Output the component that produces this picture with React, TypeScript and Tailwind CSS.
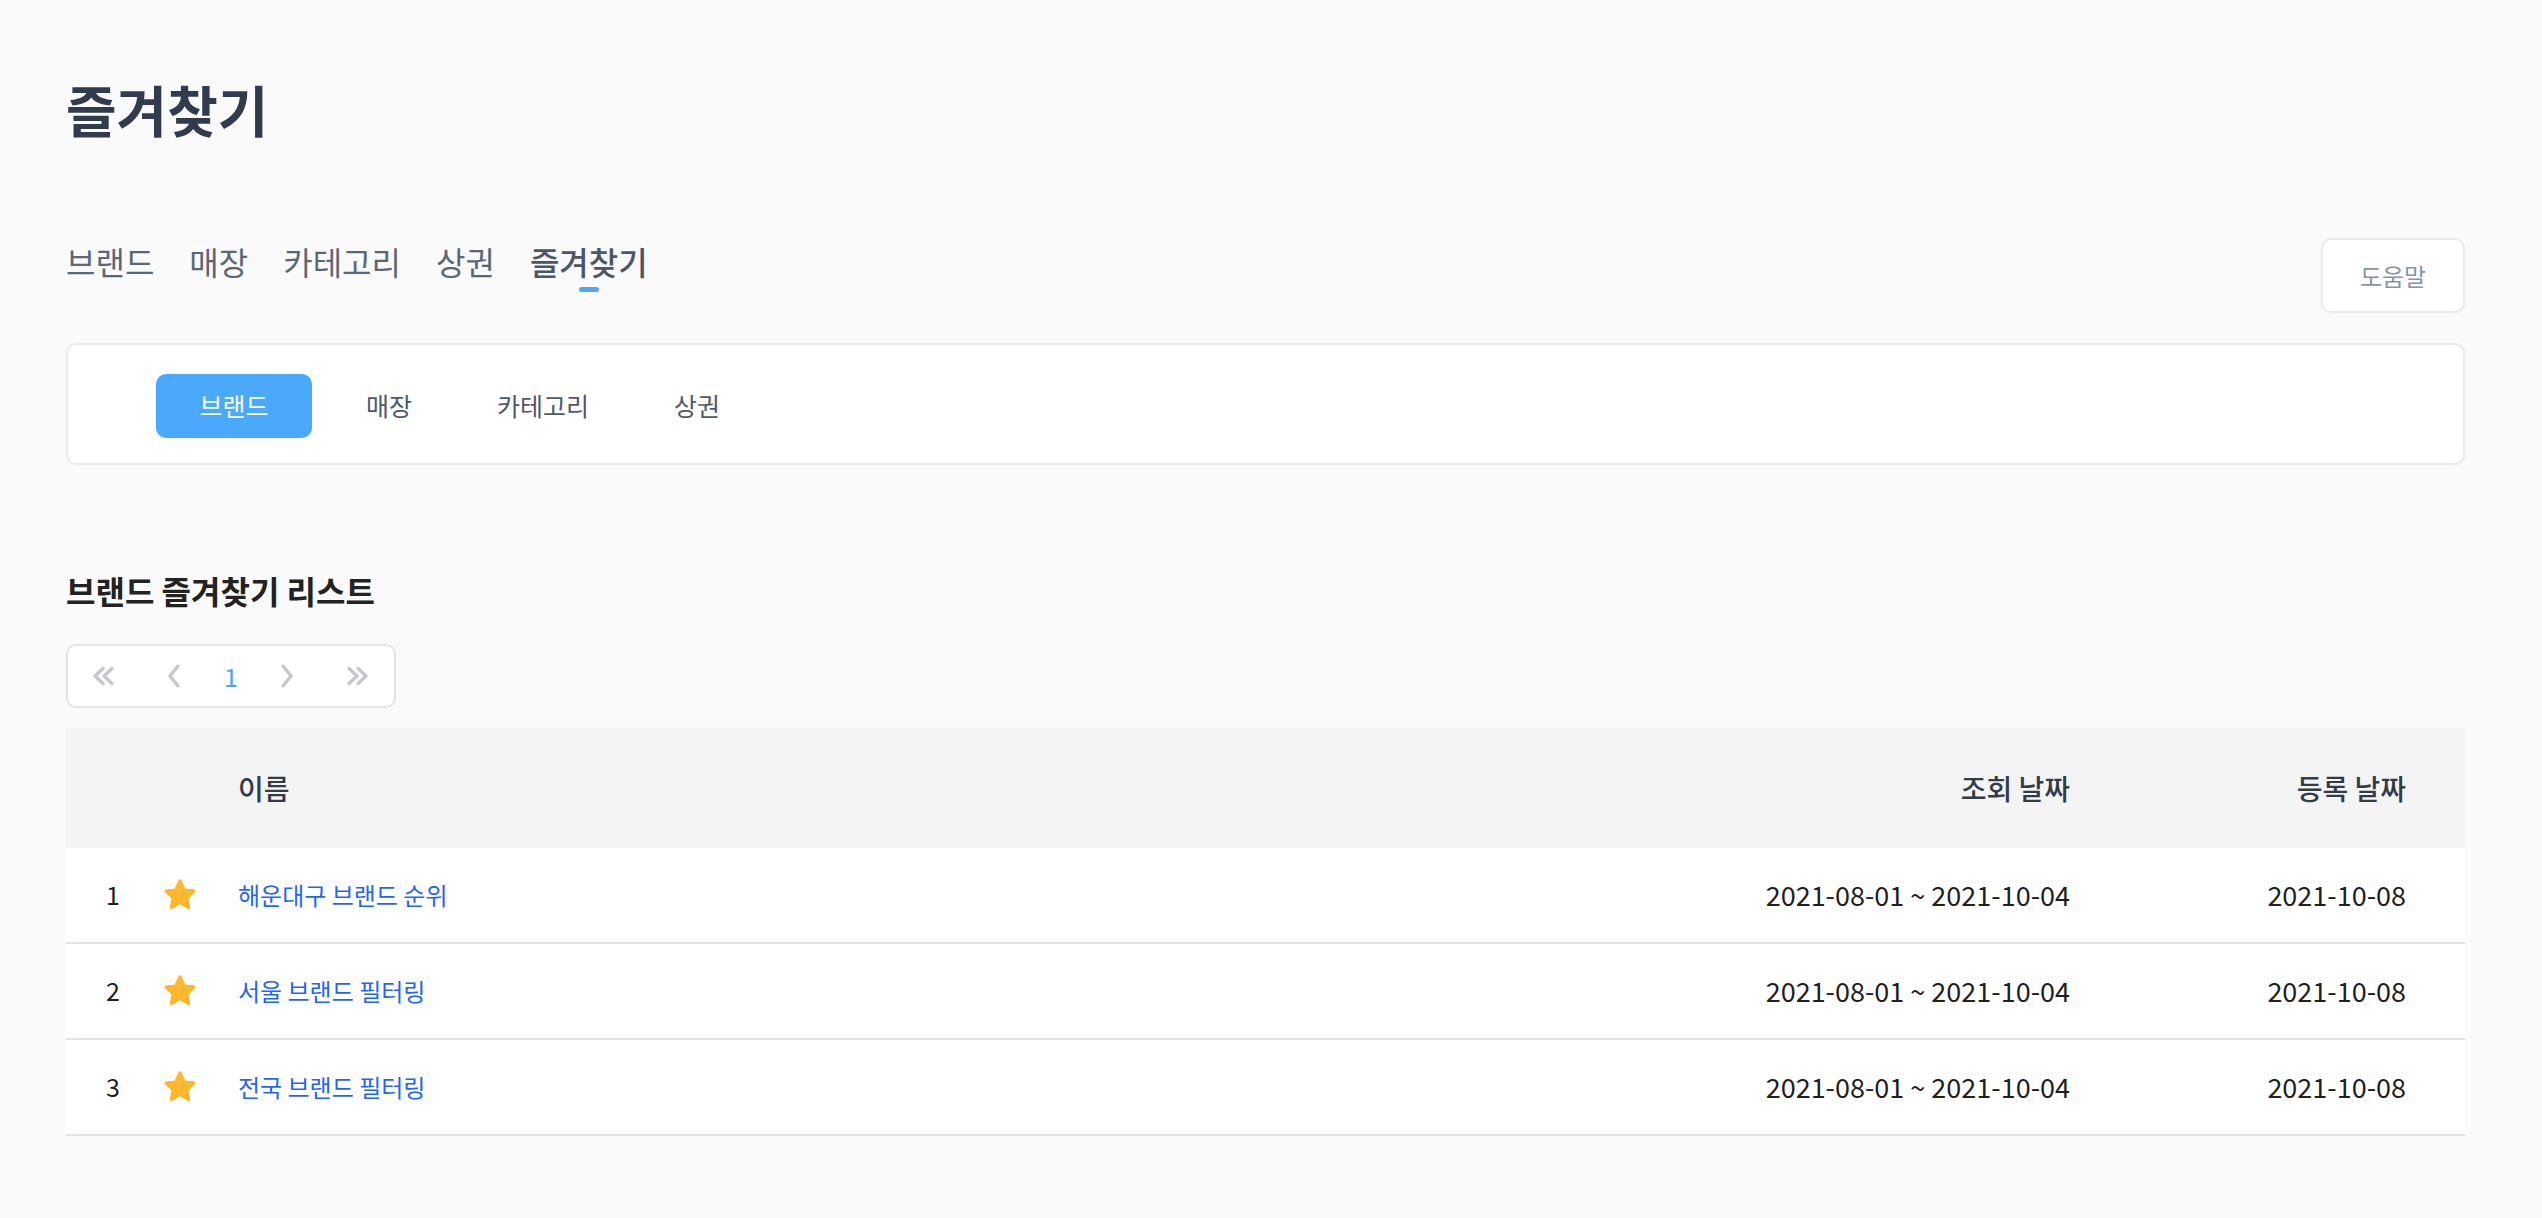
import React from 'react';

const FONT = { fontFamily: '"Noto Sans CJK KR", "Noto Sans", sans-serif' };

const topTabs = ['브랜드', '매장', '카테고리', '상권', '즐겨찾기'];
const subTabs = ['브랜드', '매장', '카테고리', '상권'];

const rows = [
  { no: 1, name: '해운대구 브랜드 순위', range: '2021-08-01 ~ 2021-10-04', date: '2021-10-08' },
  { no: 2, name: '서울 브랜드 필터링', range: '2021-08-01 ~ 2021-10-04', date: '2021-10-08' },
  { no: 3, name: '전국 브랜드 필터링', range: '2021-08-01 ~ 2021-10-04', date: '2021-10-08' },
];

const StarIcon = () => (
  <svg width="36" height="36" viewBox="0 0 24 24">
    <polygon
      points="12,2.6 14.9,8.6 21.4,9.4 16.6,13.9 17.9,20.4 12,17.2 6.1,20.4 7.4,13.9 2.6,9.4 9.1,8.6"
      fill="#fbb82d"
      stroke="#fbb82d"
      strokeWidth="2"
      strokeLinejoin="round"
    />
  </svg>
);

const Chevron = ({ dir, double }: { dir: 'left' | 'right'; double?: boolean }) => {
  const flip = dir === 'right' ? 'scale(-1,1) translate(-26,0)' : undefined;
  return (
    <svg width="26" height="24" viewBox="0 0 26 24" fill="none">
      <g transform={flip} stroke="#c4c7ce" strokeWidth="3.4" strokeLinecap="round" strokeLinejoin="round">
        {double ? (
          <>
            <polyline points="12,4.5 4,12 12,19.5" />
            <polyline points="21,4.5 13,12 21,19.5" />
          </>
        ) : (
          <polyline points="17,2 9,12 17,22" />
        )}
      </g>
    </svg>
  );
};

export default function App() {
  return (
    <div className="min-h-screen w-full bg-[#fafafa] pl-[66px] pr-[77px] pt-[74px] pb-[60px]" style={FONT}>
      {/* page title */}
      <h1 className="text-[55px] leading-[68px] font-bold text-[#303c4d]">즐겨찾기</h1>

      {/* top tabs + help */}
      <div className="mt-[96px] flex items-start justify-between">
        <div className="flex gap-[35px] pt-[2px]">
          {topTabs.map((t) => {
            const active = t === '즐겨찾기';
            return (
              <div key={t} className="flex flex-col items-center">
                <span
                  className={`text-[32px] leading-[42px] ${
                    active ? 'font-medium text-[#4b5667]' : 'text-[#5b6778]'
                  }`}
                >
                  {t}
                </span>
                {active && <span className="mt-[5px] h-[5px] w-[20px] rounded-full bg-[#4aa8fd]" />}
              </div>
            );
          })}
        </div>
        <button className="h-[75px] w-[144px] rounded-[10px] border-2 border-[#ebebeb] bg-white text-[24px] text-[#8495ab]">
          도움말
        </button>
      </div>

      {/* sub tab card */}
      <div className="mt-[30px] flex h-[122px] items-start rounded-[10px] border-2 border-[#ebebeb] bg-white pl-[88px] pt-[29px]">
        {subTabs.map((t, i) => (
          <div
            key={t}
            className={`flex h-[64px] items-center justify-center rounded-[10px] text-[25px] ${
              i === 0 ? 'w-[156px] bg-[#4aa8fd] text-white' : 'w-[154px] text-[#4f5968]'
            }`}
          >
            {t}
          </div>
        ))}
      </div>

      {/* list title */}
      <h2 className="mt-[104px] text-[32px] leading-[42px] font-bold text-[#222]">브랜드 즐겨찾기 리스트</h2>

      {/* pagination */}
      <div className="mt-[33px] flex h-[64px] w-[330px] items-center rounded-[10px] border-2 border-[#e3e4ea] bg-white pl-[23px]">
        <Chevron dir="left" double />
        <span className="ml-[44px] flex">
          <Chevron dir="left" />
        </span>
        <span className="ml-[37px] text-[25px] leading-none text-[#4aa5f8]">1</span>
        <span className="ml-[36px] flex">
          <Chevron dir="right" />
        </span>
        <span className="ml-[44px] flex">
          <Chevron dir="right" double />
        </span>
      </div>

      {/* table */}
      <div className="mt-[20px]">
        <div className="flex h-[120px] items-center bg-[#f4f4f4] text-[28px] font-medium text-[#333b47]">
          <div className="w-[94px]" />
          <div className="w-[40px]" />
          <div className="ml-[38px] flex-1">이름</div>
          <div className="w-[400px] text-right">조회 날짜</div>
          <div className="w-[395px] pr-[59px] text-right">등록 날짜</div>
        </div>
        {rows.map((r) => (
          <div key={r.no} className="flex h-[96px] items-center border-b-2 border-[#e2e2ea] bg-white text-[#1f1f1f]">
            <div className="w-[94px] text-center text-[25px]">{r.no}</div>
            <div className="flex w-[40px] justify-center">
              <StarIcon />
            </div>
            <div className="ml-[38px] flex-1 text-[24px] text-[#1f66f2]">{r.name}</div>
            <div className="w-[400px] text-right text-[27px]">{r.range}</div>
            <div className="w-[395px] pr-[59px] text-right text-[27px]">{r.date}</div>
          </div>
        ))}
      </div>
    </div>
  );
}
